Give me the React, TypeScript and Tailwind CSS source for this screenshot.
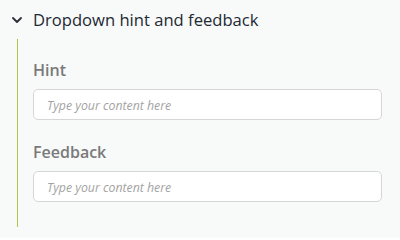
import React from "react";

export default function App() {
  return (
    <div className="w-[400px] h-[238px] bg-[#f8f9f9] overflow-hidden" style={{ fontFamily: '"Open Sans", sans-serif' }}>
      <div className="flex items-center pt-2 pl-3 h-8">
        <svg width="10" height="6" viewBox="0 0 10 6" className="shrink-0">
          <path d="M1 1 L5 5 L9 1" fill="none" stroke="#2a2f36" strokeWidth="1.8" strokeLinecap="round" strokeLinejoin="round" />
        </svg>
        <span className="ml-[11px] text-[16.6px] leading-6 font-medium text-[#222933]">Dropdown hint and feedback</span>
      </div>
      <div className="ml-[17px] mt-[7px] border-l border-[#a9c84a] pl-[15px] pr-[18px] pt-[19px] pb-[25px]">
        <div className="text-[16px] leading-6 font-semibold text-[#7a7a7a]">Hint</div>
        <input
          className="mt-[7px] block w-full h-[31px] rounded-[5px] border border-[#d6d6d6] bg-white px-[13px] pt-[2px] text-[12.3px] italic placeholder:text-[#a3a3a3] outline-none"
          placeholder="Type your content here"
        />
        <div className="mt-[20px] text-[16px] leading-6 font-semibold text-[#7a7a7a]">Feedback</div>
        <input
          className="mt-[7px] block w-full h-[31px] rounded-[5px] border border-[#d6d6d6] bg-white px-[13px] pt-[2px] text-[12.3px] italic placeholder:text-[#a3a3a3] outline-none"
          placeholder="Type your content here"
        />
      </div>
    </div>
  );
}
